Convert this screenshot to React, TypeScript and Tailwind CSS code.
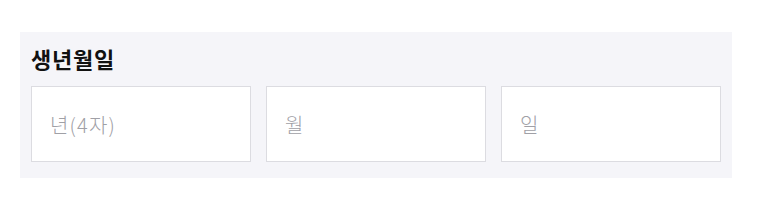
import React from "react";

export default function App() {
  const fields = ["년(4자)", "월", "일"];
  return (
    <div
      className="w-[757px] h-[214px] bg-white pt-[32px] pl-[20px]"
      style={{ fontFamily: '"Noto Sans CJK KR", "Noto Sans", sans-serif' }}
    >
      <div className="w-[712px] bg-[#f5f5f9] pt-[12px] pb-[16px] px-[11px]">
        <div className="text-[22px] leading-[29px] font-bold text-[#111111] tracking-[0.8px]">생년월일</div>
        <div className="mt-[13px] grid grid-cols-3 gap-[15px]">
          {fields.map((f) => (
            <div
              key={f}
              className="h-[76px] bg-white border border-[#dcdce1] flex items-center px-[18px] pt-[2px]"
            >
              <span className="text-[20px] font-light text-[#a0a0a6] tracking-[1.2px]">{f}</span>
            </div>
          ))}
        </div>
      </div>
    </div>
  );
}
